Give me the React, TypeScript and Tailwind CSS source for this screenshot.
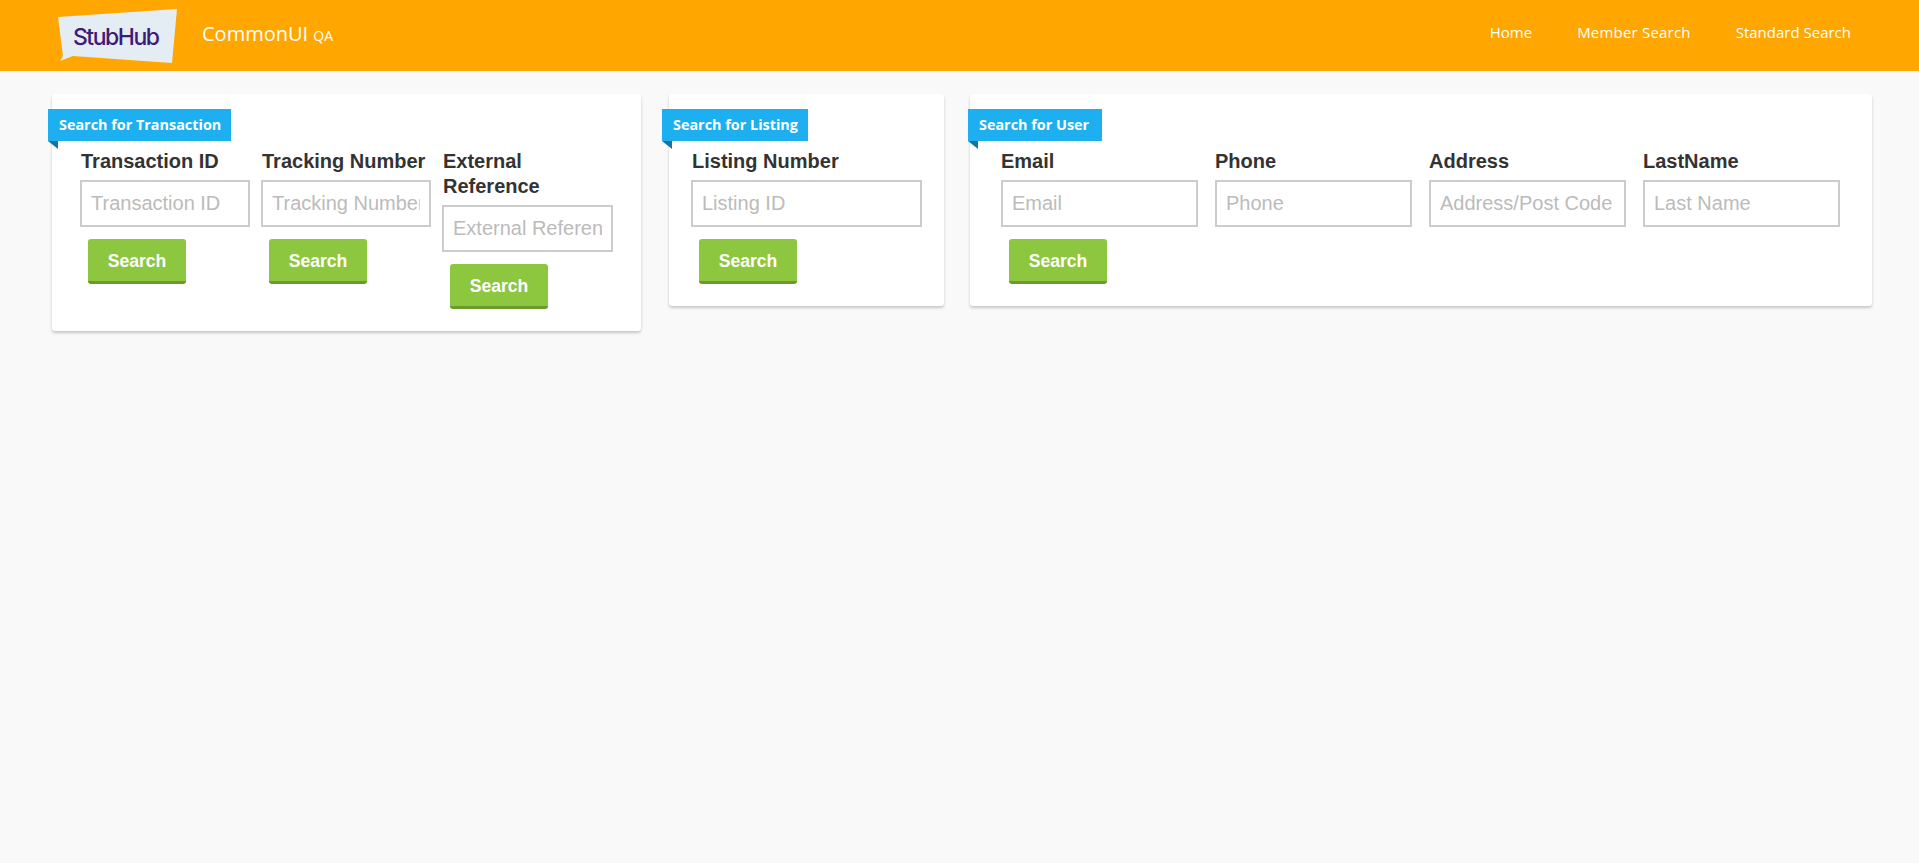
import React from 'react';

const Field: React.FC<{ label: string; placeholder: string; className: string; withButton?: boolean; flush?: boolean }> = ({ label, placeholder, className, withButton, flush }) => (
  <div className={`flex flex-col ${className}`}>
    <label className={`mb-[6px] text-[20px] leading-[25px] font-bold text-[#333] ${flush ? '' : 'pl-px'}`}>{label}</label>
    <input
      type="text"
      placeholder={placeholder}
      className="w-full h-[47px] px-[9px] bg-white border-2 border-[#ccc] text-[20px] text-[#333] placeholder:text-[#bbb] outline-none"
    />
    {withButton && (
      <button
        type="button"
        className="mt-3 ml-2 w-[98px] h-[45px] pt-0.5 rounded-[3px] bg-[#8dc63f] border-b-[3px] border-[#6b9a2c] text-white text-[17.6px] font-bold"
      >
        Search
      </button>
    )}
  </div>
);

const Card: React.FC<{ title: string; className: string; ribbon: string; children: React.ReactNode }> = ({ title, className, ribbon, children }) => (
  <section className={`bg-white rounded-[3px] shadow-[0_2px_3px_rgba(0,0,0,0.2)] pt-[15px] self-start ${className}`}>
    <div className={`relative w-fit h-8 pl-[11px] bg-[#1dafef] text-white text-[14.4px] leading-8 font-bold font-['Open_Sans',sans-serif] whitespace-nowrap ${ribbon}`}>
      {title}
      <span className="absolute left-0 top-full border-t-[8px] border-l-[10px] border-t-[#0f76a5] border-l-transparent" />
    </div>
    {children}
  </section>
);

const Logo = () => (
  <svg width="122" height="58" viewBox="0 0 122 58" className="shrink-0">
    <polygon points="0,8 119,0 114,54 15,47 2,52 5,47" fill="#e4edf4" />
    <text x="15" y="36" fontFamily="Inter, sans-serif" fontSize="23" fontWeight="500" textLength="87" lengthAdjust="spacing" fill="#3f1a78">StubHub</text>
  </svg>
);

export default function App() {
  return (
    <div className="min-h-[863px] bg-[#f9f9f9] font-['Liberation_Sans',Arial,sans-serif]">
      <header className="h-[71px] bg-[#ffa700] flex items-start pl-[58px] pr-[68px] text-white font-['Open_Sans',sans-serif]">
        <div className="mt-[9px]"><Logo /></div>
        <div className="ml-[22px] mt-5 text-[20px] leading-[28px]">
          CommonUI <span className="text-[14px]">QA</span>
        </div>
        <nav className="ml-auto mt-[21px] flex gap-[45px] text-[15px] leading-[22px]">
          <a>Home</a>
          <a className="tracking-[0.2px]">Member Search</a>
          <a>Standard Search</a>
        </nav>
      </header>
      <main className="flex pt-[23px] pl-[52px]">
        <Card title="Search for Transaction" ribbon="-ml-1 pr-[10px]" className="w-[589px] h-[237px]">
          <div className="flex gap-[11px] pl-7 pt-2">
            <Field label="Transaction ID" placeholder="Transaction ID" className="w-[170px]" withButton />
            <Field label="Tracking Number" placeholder="Tracking Number" className="w-[170px]" withButton />
            <Field label="External Reference" placeholder="External Reference" className="w-[171px]" withButton />
          </div>
        </Card>
        <Card title="Search for Listing" ribbon="-ml-[7px] pr-[10px]" className="ml-7 w-[275px] h-[212px]">
          <div className="flex pl-[22px] pt-2">
            <Field label="Listing Number" placeholder="Listing ID" className="w-[231px]" withButton />
          </div>
        </Card>
        <Card title="Search for User" ribbon="-ml-0.5 pr-[13px]" className="ml-[26px] w-[902px] h-[212px]">
          <div className="flex gap-[17px] pl-[31px] pt-2">
            <Field label="Email" placeholder="Email" className="w-[197px]" withButton flush />
            <Field label="Phone" placeholder="Phone" className="w-[197px]" flush />
            <Field label="Address" placeholder="Address/Post Code" className="w-[197px]" flush />
            <Field label="LastName" placeholder="Last Name" className="w-[197px]" flush />
          </div>
        </Card>
      </main>
    </div>
  );
}
